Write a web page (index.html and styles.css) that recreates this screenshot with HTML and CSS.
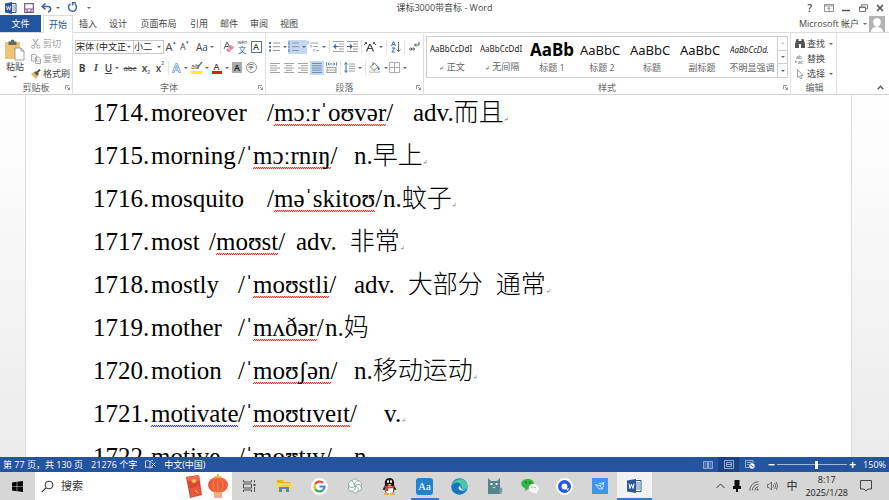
FILE: index.html
```html
<!DOCTYPE html>
<html lang="zh-CN">
<head>
<meta charset="utf-8">
<title>课标3000带音标 - Word</title>
<link rel="stylesheet" href="styles.css">
</head>
<body>
<header class="titlebar">
  <div class="quick">
    <svg width="12" height="12" viewBox="0 0 12 12"><path d="M6 1.500h5v9H6z" fill="#fff" stroke="#2b579a"/><path d="M7.500 4H10M7.500 6H10M7.500 8H10" stroke="#2b579a" stroke-width=".7"/><path d="M0 1.500 7 0v12L0 10.500z" fill="#2b579a"/><path d="m1.500 4 .9 4 1.100-3.500L4.600 8l.9-4" fill="none" stroke="#fff" stroke-width=".8"/></svg>
    <button aria-label="保存"><svg width="10" height="10" viewBox="0 0 10 10"><path d="M.7.700h8.600v8.600H.7z" fill="#fff" stroke="#80578f" stroke-width="1.200"/><path d="M1 6h8M3 6v3h4V6" fill="none" stroke="#80578f"/></svg></button>
    <button class="split" aria-label="撤消"><svg width="11" height="10" viewBox="0 0 11 10"><path d="M4.500.5 1.200 3.500l3.300 3M1.500 3.500H7c3.500 0 3.500 5 0 5.500" fill="none" stroke="#3c68a8" stroke-width="1.600"/></svg><i class="caret"></i></button>
    <button aria-label="重复"><svg width="11" height="11" viewBox="0 0 11 11"><path d="M3.500 1.800A4 4 0 1 0 8 2.200M5.600 3.600V.8H9" fill="none" stroke="#3c68a8" stroke-width="1.500"/></svg></button>
    <button aria-label="自定义"><i class="caret"></i></button>
  </div>
  <h1>课标3000带音标 - Word</h1>
  <div class="window-buttons">
    <button aria-label="帮助" class="help">?</button>
    <button aria-label="功能区"><svg width="10" height="8" viewBox="0 0 10 8"><path d="M.5.500h9v7h-9zM.5 2h9M5 7V3.500M3.500 5 5 3.500 6.500 5" fill="none" stroke="#777" stroke-width=".8"/></svg></button>
    <button aria-label="最小化"><svg width="9" height="8" viewBox="0 0 9 8"><path d="M0 6.500h8" stroke="#555" stroke-width="1.500"/></svg></button>
    <button aria-label="还原"><svg width="9" height="8" viewBox="0 0 9 8"><path d="M2.500 2.500V.8h6v4H6.500M.5 3h6v4.500h-6zM.5 3.400h6" fill="none" stroke="#666" stroke-width=".9"/></svg></button>
    <button aria-label="关闭"><svg width="8" height="8" viewBox="0 0 8 8"><path d="m1 1 6 6M7 1 1 7" stroke="#555" stroke-width="1.600"/></svg></button>
  </div>
</header>

<nav class="tabs">
  <button class="file">文件</button>
  <button class="active">开始</button>
  <button>插入</button>
  <button>设计</button>
  <button class="wide">页面布局</button>
  <button>引用</button>
  <button>邮件</button>
  <button>审阅</button>
  <button>视图</button>
  <a class="account" href="#account">Microsoft 帐户<i class="caret"></i>
    <svg width="16" height="16" viewBox="0 0 16 16"><path d="M0 0h16v16H0z" fill="#b3b3b3"/><path d="M8 2c6 0 4 9 0 9S2 2 8 2zM2 16c0-4 3-5 6-5s6 1 6 5z" fill="#fff"/></svg>
  </a>
</nav>

<section class="ribbon">
  <div class="group clipboard">
    <div class="clip-body">
      <button class="paste">
        <svg width="20" height="22" viewBox="0 0 20 22"><path d="M0 3h15v17H0z" fill="#efc372"/><path d="M3.500 2.500h2a2 2 0 0 1 4 0h2V6h-8z" fill="#666"/><path d="M10 9h6l3 3v9h-9z" fill="#fff" stroke="#888" stroke-width=".8"/><path d="M16 9v3h3" fill="none" stroke="#888" stroke-width=".8"/></svg>
        <span>粘贴</span><i class="caret"></i>
      </button>
      <div class="stack">
        <button class="off"><svg width="10" height="10" viewBox="0 0 10 10"><path d="m2 0 4 6M7 0 3 6" stroke="#aaa" stroke-width="1.200"/><circle cx="2" cy="7.800" r="1.500" fill="none" stroke="#aaa"/><circle cx="7.500" cy="7.800" r="1.500" fill="none" stroke="#aaa"/></svg>剪切</button>
        <button class="off"><svg width="10" height="10" viewBox="0 0 10 10"><path d="M.5.500h4l1 1V7h-5zM4.500 3h3l2 2v4.500h-5z" fill="#fff" stroke="#aaa"/><path d="M5.500 6h3M5.500 7.500h3M1.500 3h2M1.500 5h2" stroke="#bbb" stroke-width=".7"/></svg>复制</button>
        <button><svg width="10" height="10" viewBox="0 0 10 10"><path d="m0 5 3-2 4 4-2 3z" fill="#e9b45d"/><path d="m3 3.500 2-1.500 3 3-1.500 2z" fill="#555"/><path d="m6 3.500 3-3" stroke="#555" stroke-width="2"/></svg>格式刷</button>
      </div>
    </div>
    <footer><span>剪贴板</span><svg class="launch" width="5" height="5" viewBox="0 0 5 5"><path d="M.5 4V.5H4M2 2l2.500 2.500M4.500 2.500v2h-2" fill="none" stroke="#777" stroke-width=".8"/></svg></footer>
  </div>

  <div class="group font">
    <div class="row">
      <div class="combo name"><select aria-label="字体"><option>宋体 (中文正文)</option></select><i class="caret"></i></div>
      <div class="combo size"><select aria-label="字号"><option>小二</option></select><i class="caret"></i></div>
      <button class="w14 grow" aria-label="增大字号">A<sup>▴</sup></button>
      <button class="w14 shrink" aria-label="减小字号">A<sup>▾</sup></button>
      <button class="w28 case">Aa<i class="caret"></i></button>
      <i class="sep"></i>
      <button class="w14" aria-label="清除格式"><svg width="12" height="12" viewBox="0 0 12 12"><path d="m1 8 3-7 2.500 5M2 5.500h3.500" fill="none" stroke="#555"/><path d="m3 9 5-5 3 2.500-5 5z" fill="#e3879c"/><path d="m5 7 3 2.500" stroke="#fff" stroke-width=".7"/></svg></button>
      <button class="w14 pinyin"><small>wén</small><b>文</b></button>
      <button class="w14"><span class="boxed">A</span></button>
    </div>
    <div class="row">
      <button class="w14 bold">B</button>
      <button class="w14 italic">I</button>
      <button class="w18"><u>U</u><i class="caret"></i></button>
      <button class="w18 strike"><s>abc</s></button>
      <button class="w14 script">x<sub>2</sub></button>
      <button class="w14 script">x<sup>2</sup></button>
      <i class="sep"></i>
      <button class="w20" aria-label="文本效果"><svg width="9" height="10" viewBox="0 0 9 10"><path d="M.5 9.500 3.600.6h1.800l3.100 8.900H6.800l-.7-2.200H2.900l-.7 2.200zM3.400 5.800h2.200L4.500 2.400z" fill="#fff" stroke="#5d91cb" stroke-width=".8"/></svg><i class="caret"></i></button>
      <button class="w20"><span class="marker">ab<svg width="6" height="6" viewBox="0 0 6 6"><path d="M0 6 5 0" stroke="#666" stroke-width="1.300"/></svg></span><i class="caret"></i></button>
      <button class="w20"><span class="colour">A</span><i class="caret"></i></button>
      <button class="w14"><span class="shaded">A</span></button>
      <button class="w14"><span class="circled">字</span></button>
    </div>
    <footer><span>字体</span><svg class="launch" width="5" height="5" viewBox="0 0 5 5"><path d="M.5 4V.5H4M2 2l2.500 2.500M4.500 2.500v2h-2" fill="none" stroke="#777" stroke-width=".8"/></svg></footer>
  </div>

  <div class="group paragraph">
    <div class="row">
      <button class="w20" aria-label="项目符号"><svg width="11" height="11" viewBox="0 0 11 11"><path d="M0 1h2v2H0zM0 4.700h2v2H0zM0 8.500h2v2H0z" fill="#4472b4"/><path d="M4 2h7M4 5.700h7M4 9.500h7" stroke="#888" stroke-width=".9"/></svg><i class="caret"></i></button>
      <button class="w20 on" aria-label="编号"><svg width="11" height="11" viewBox="0 0 11 11"><path d="M1 .5v3M1 4.500v2.500M1 8v3" stroke="#4472b4"/><path d="M4 2h7M4 5.700h7M4 9.500h7" stroke="#7f91ac" stroke-width=".9"/></svg><i class="caret"></i></button>
      <button class="w20" aria-label="多级列表"><svg width="12" height="11" viewBox="0 0 12 11"><path d="M1 0v3M4 4v2.500M7 8v2.500" stroke="#7c99c2"/><path d="M3 2h8M6 5.500h5M9 9.500h3" stroke="#999" stroke-width=".9"/></svg><i class="caret"></i></button>
      <i class="sep"></i>
      <button class="w14" aria-label="减少缩进"><svg width="11" height="11" viewBox="0 0 11 11"><path d="M0 .5h11M6 3h5M6 5.500h5M6 8h5M0 10.500h11" stroke="#888" stroke-width=".8"/><path d="M5.500 5.500H1M3 3.500l-2 2 2 2" fill="none" stroke="#3569ad" stroke-width="1.200"/></svg></button>
      <button class="w14" aria-label="增加缩进"><svg width="11" height="11" viewBox="0 0 11 11"><path d="M0 .5h11M6 3h5M6 5.500h5M6 8h5M0 10.500h11" stroke="#888" stroke-width=".8"/><path d="M0 5.500h5M3 3.500l2 2-2 2" fill="none" stroke="#3569ad" stroke-width="1.200"/></svg></button>
      <i class="sep"></i>
      <button class="w20" aria-label="中文版式"><svg width="12" height="10" viewBox="0 0 12 10"><path d="m2.500 9.500 3-7h1l3 7M4 6.500h4" fill="none" stroke="#444" stroke-width="1.200"/><path d="m0 3 2-2M1 .5h1.500V2M12 3l-2-2M11 .5H9.500V2" fill="none" stroke="#444" stroke-width=".9"/></svg><i class="caret"></i></button>
      <i class="sep"></i>
      <button class="w14" aria-label="排序"><svg width="10" height="12" viewBox="0 0 10 12"><path d="m.5 5 2-4.500 2 4.500M1.300 3.500h2.400M.8 7H4L.8 11H4.200" fill="none" stroke="#3569ad"/><path d="M7.500 1v9.500M5.500 8.500l2 2.200 2-2.200" fill="none" stroke="#666"/></svg></button>
      <i class="sep"></i>
      <button class="w14" aria-label="显示标记"><svg width="11" height="11" viewBox="0 0 11 11"><path d="M10 1v3H5.500M7 2.500 5.500 4 7 5.500M0 8h5.500M4 6.300 5.700 8 4 9.700M1.500 6.500 3 8 1.500 9.500" fill="none" stroke="#555"/></svg></button>
    </div>
    <div class="row">
      <button class="w14" aria-label="左对齐"><svg width="10" height="10" viewBox="0 0 10 10"><path d="M0 .5h10M0 2.700h7M0 5h10M0 7.200h7M0 9.500h10" stroke="#888" stroke-width=".8"/></svg></button>
      <button class="w14" aria-label="居中"><svg width="10" height="10" viewBox="0 0 10 10"><path d="M0 .5h10M2 2.700h6M0 5h10M2 7.200h6M0 9.500h10" stroke="#888" stroke-width=".8"/></svg></button>
      <button class="w14" aria-label="右对齐"><svg width="10" height="10" viewBox="0 0 10 10"><path d="M0 .5h10M3 2.700h7M0 5h10M3 7.200h7M0 9.500h10" stroke="#888" stroke-width=".8"/></svg></button>
      <button class="w14 on" aria-label="两端对齐"><svg width="10" height="10" viewBox="0 0 10 10"><path d="M0 .5h10M0 2.700h10M0 5h10M0 7.200h10M0 9.500h10" stroke="#6c81a1" stroke-width=".9"/></svg></button>
      <button class="w14" aria-label="分散对齐"><svg width="11" height="11" viewBox="0 0 11 11"><path d="M.5 0v4M10.500 0v4M2 2h7M3.500.5 2 2l1.500 1.500M7.500.5 9 2 7.500 3.500" fill="none" stroke="#4b73a8" stroke-width=".8"/><path d="M1 5.500h9M1 8h9M1 10.500h9M1 5v6M10 5v6" stroke="#888" stroke-width=".8"/></svg></button>
      <i class="sep"></i>
      <button class="w20" aria-label="行距"><svg width="11" height="11" viewBox="0 0 11 11"><path d="M2 .5v10M.3 2.500 2 .7l1.700 1.800M.3 8.500 2 10.300l1.700-1.800" fill="none" stroke="#3569ad"/><path d="M5 2h6M5 4.300h6M5 6.600h6M5 9h6" stroke="#888" stroke-width=".8"/></svg><i class="caret"></i></button>
      <i class="sep"></i>
      <button class="w20" aria-label="底纹"><svg width="12" height="11" viewBox="0 0 12 11"><path d="m1.500 5 4-4 3.500 4-4 3.500zM4 3V0" fill="#fff" stroke="#666" stroke-width=".9"/><path d="M9.500 4.500c1.500 2 1.500 3 .5 3.500s-1.500-1-.5-3.500z" fill="#3569ad"/><path d="M.5 9h10v1.500H.5z" fill="#fff" stroke="#aaa" stroke-width=".6"/></svg><i class="caret"></i></button>
      <button class="w20" aria-label="边框"><svg width="11" height="11" viewBox="0 0 11 11"><path d="M.5.500h10v10H.5zM5.500.5v10M.5 5.500h10" fill="none" stroke="#999" stroke-width=".8"/></svg><i class="caret"></i></button>
    </div>
    <footer><span>段落</span><svg class="launch" width="5" height="5" viewBox="0 0 5 5"><path d="M.5 4V.5H4M2 2l2.500 2.500M4.500 2.500v2h-2" fill="none" stroke="#777" stroke-width=".8"/></svg></footer>
  </div>

  <div class="group styles">
    <div class="gallery">
      <button><span class="sample">AaBbCcDdI</span><span><small>↲</small> 正文</span></button>
      <button><span class="sample">AaBbCcDdI</span><span><small>↲</small> 无间隔</span></button>
      <button><span class="sample huge">AaBb</span><span>标题 1</span></button>
      <button><span class="sample large">AaBbC</span><span>标题 2</span></button>
      <button><span class="sample large">AaBbC</span><span>标题</span></button>
      <button><span class="sample large">AaBbC</span><span>副标题</span></button>
      <button><span class="sample slant">AaBbCcDd.</span><span>不明显强调</span></button>
      <div class="scroller"><button aria-label="上一行"><i class="caret up"></i></button><button aria-label="下一行"><i class="caret"></i></button><button aria-label="更多"><i class="caret more"></i></button></div>
    </div>
    <footer><span>样式</span><svg class="launch" width="5" height="5" viewBox="0 0 5 5"><path d="M.5 4V.5H4M2 2l2.500 2.500M4.500 2.500v2h-2" fill="none" stroke="#777" stroke-width=".8"/></svg></footer>
  </div>

  <div class="group editing">
    <div class="stack">
      <button><svg width="10" height="9" viewBox="0 0 10 9"><path d="M1.500 0h2v2h3V0h2L10 5v4H6V5H4v4H0V5z" fill="#555"/></svg>查找<i class="caret"></i></button>
      <button><svg width="10" height="10" viewBox="0 0 10 10"><text x="1" y="5" class="tiny">ab</text><text x="3" y="10" class="tiny">ac</text><path d="M0 6v2h2" fill="none" stroke="#3569ad" stroke-width=".8"/></svg>替换</button>
      <button><svg width="10" height="10" viewBox="0 0 10 10"><path d="m2.500.5 5.500 6H5.500L7 9.300 5.500 10 4.300 7.200 2.500 8.500z" fill="#fff" stroke="#888" stroke-width=".8"/></svg>选择<i class="caret"></i></button>
    </div>
    <footer><span>编辑</span></footer>
  </div>
  <button class="collapse" aria-label="折叠功能区"><svg width="7" height="5" viewBox="0 0 7 5"><path d="m.7 4.200 2.800-3 2.800 3" fill="none" stroke="#555" stroke-width="1.300"/></svg></button>
</section>

<main class="workspace">
  <article class="page">
    <p><span class="num">1714.</span><span class="t4">moreover</span><span class="t5">/<span class="bad">mɔːrˈoʊvər</span>/</span>adv.而且<i class="mark">↲</i></p>
    <p><span class="num">1715.</span><span class="t3">morning</span><span class="t4">/<span class="stress">ˈ</span><span class="bad">mɔːrnɪŋ</span>/</span>n.早上<i class="mark">↲</i></p>
    <p><span class="num">1716.</span><span class="t4">mosquito</span><span class="t4">/<span class="bad">məˈskitoʊ</span>/</span>n.蚊子<i class="mark">↲</i></p>
    <p><span class="num">1717.</span><span class="t2">most</span><span class="t3">/<span class="bad">moʊst</span>/</span>adv.<span class="next">非常</span><i class="mark">↲</i></p>
    <p><span class="num">1718.</span><span class="t3">mostly</span><span class="t4">/<span class="stress">ˈ</span><span class="bad">moʊstli</span>/</span>adv.<span class="next">大部分</span><span class="next">通常</span><i class="mark">↲</i></p>
    <p><span class="num">1719.</span><span class="t3">mother</span><span class="t3">/<span class="stress">ˈ</span><span class="bad">mʌðər</span>/</span>n.妈</p>
    <p><span class="num">1720.</span><span class="t3">motion</span><span class="t4">/<span class="stress">ˈ</span><span class="bad">moʊʃən</span>/</span>n.移动运动<i class="mark">↲</i></p>
    <p><span class="num">1721.</span><span class="t3"><span class="grammar">motivate</span></span><span class="t5">/<span class="stress">ˈ</span><span class="bad">moʊtɪveɪt</span>/</span>v.<i class="mark">↲</i></p>
    <p><span class="num">1722.</span><span class="t3">motive</span><span class="t4">/<span class="stress">ˈ</span><span class="bad">moʊtɪv</span>/</span>n.</p>
  </article>
</main>

<footer class="status">
  <span>第 77 页，共 130 页</span>
  <span>21276 个字</span>
  <svg width="11" height="9" viewBox="0 0 11 9"><path d="M5 1.500C3.500.5 2 .5.5 1v6.500c1.500-.5 3-.5 4.500.5zM5 1.500C6 .8 7 .6 8 .6M5 8c1-.7 2-.9 3-.9M6.500 2.500l4 4M10.500 2.500l-4 4" fill="none" stroke="#dce6f4" stroke-width=".9"/></svg>
  <span>中文(中国)</span>
  <div class="views">
    <button aria-label="阅读视图"><svg width="10" height="8" viewBox="0 0 10 8"><path d="M.5.500h4v7h-4zM5.500.500h4v7h-4zM1.500 2h2M1.500 4h2M1.500 6h2M6.500 2h2M6.500 4h2M6.500 6h2" fill="none" stroke="#a9bfde" stroke-width=".8"/></svg></button>
    <button class="current" aria-label="页面视图"><svg width="10" height="9" viewBox="0 0 10 9"><path d="M.5.500h9v8h-9zM2.500 2.500h5v4h-5zM2.500 4.500h5" fill="none" stroke="#b3c6e2" stroke-width=".8"/></svg></button>
    <button aria-label="Web 版式"><svg width="10" height="9" viewBox="0 0 10 9"><path d="M8 3V.5H.5v7H4M2 2.500h5M2 4.500h2" fill="none" stroke="#b3c6e2" stroke-width=".8"/><circle cx="7" cy="6" r="2.700" fill="#fff"/><path d="m5.500 5 3 2" stroke="#2b579a"/></svg></button>
  </div>
  <div class="zoom"><button aria-label="缩小">−</button><input type="range" min="10" max="210" value="122" aria-label="显示比例"><button aria-label="放大">+</button><span>150%</span></div>
</footer>

<nav class="taskbar">
  <button class="start" aria-label="开始菜单"><svg width="11" height="11" viewBox="0 0 11 11"><path d="m0 1.500 4.700-.7v4.400H0zM5.300.7 11 0v5.200H5.300zM0 5.800h4.700v4.400L0 9.500zM5.300 5.800H11V11l-5.700-.7z" fill="#000"/></svg></button>
  <label class="search">
    <svg width="13" height="13" viewBox="0 0 13 13"><circle cx="8" cy="5" r="3.900" fill="none" stroke="#333"/><path d="M5 7.800.7 12.200" stroke="#333" stroke-width="1.200"/></svg>
    <input type="text" placeholder="搜索" aria-label="搜索">
    <svg width="44" height="25" viewBox="0 0 44 25"><path d="m1 3 13-2 3 20-12 3z" fill="#db4932"/><path d="m1 3 13-2 .8 5L9 9 2 6z" fill="#ec6c4b"/><path d="m5 14 9-2 2 8-10 3z" fill="#f0643e" opacity=".6"/><circle cx="9" cy="7" r="2" fill="#f9c65c"/><path d="m10 16 3 3" stroke="#f9c65c"/><path d="M33 0v4" stroke="#a8603c"/><path d="M29 19h8v5h-8z" fill="#f1aa9d"/><ellipse cx="33" cy="11" rx="10" ry="8" fill="#ec5d3c"/><ellipse cx="33" cy="11" rx="5" ry="8" fill="none" stroke="#f58a4a"/><path d="M33 3v16" stroke="#f58a4a"/><path d="M29 3h8M29 19h8" stroke="#f1b84e" stroke-width="1.500"/></svg>
  </label>
  <div class="apps">
    <button aria-label="任务视图"><svg width="13" height="12" viewBox="0 0 13 12"><path d="M.5 0v2h8V0M.5 12v-2h8v2M.5 4h8v4h-8zM11.500 0v2.500M11.500 7v5" fill="none" stroke="#444" stroke-width=".9"/><path d="M10.500 4h2v2h-2z" fill="#444"/></svg></button>
    <button aria-label="文件资源管理器"><svg width="17" height="14" viewBox="0 0 17 14"><path d="M1 1h6l1 2h7v9H1z" fill="#ebae2d"/><path d="M1 4h15v8H1z" fill="#ffd45e"/><path d="M3 13V8h10v5h-3v-3H6v3z" fill="#428fd0"/></svg></button>
    <button aria-label="Google"><svg width="17" height="17" viewBox="0 0 17 17"><circle cx="8.500" cy="8.500" r="8.500" fill="#fff"/><g fill="none" stroke-width="2.200"><path d="M12 4.900A5 5 0 0 0 4.200 6" stroke="#ea4335"/><path d="M4.200 6a5 5 0 0 0 0 5" stroke="#fbbc05"/><path d="M4.200 11a5 5 0 0 0 7.800 1.100" stroke="#34a853"/><path d="M12 12.100a5 5 0 0 0 1.400-3.600H8.500" stroke="#4285f4"/></g></svg></button>
    <button aria-label="浏览器"><svg width="16" height="16" viewBox="0 0 16 16"><g fill="#f6faf7" stroke="#6f9a90" stroke-width=".7"><path id="petal" d="M8 8C3 7 4 1 8 1c3 0 4 3 2 4z"/><use href="#petal" transform="rotate(60 8 8)"/><use href="#petal" transform="rotate(120 8 8)"/><use href="#petal" transform="rotate(180 8 8)"/><use href="#petal" transform="rotate(240 8 8)"/><use href="#petal" transform="rotate(300 8 8)"/></g></svg></button>
    <button aria-label="QQ"><svg width="15" height="17" viewBox="0 0 15 17"><path d="M7.500 0C3 0 2.500 4 3 7L.5 12l2-.5 1 3h8l1-3 2 .5L12 7c.5-3 0-7-4.500-7z" fill="#151515"/><ellipse cx="7.500" cy="11.500" rx="4" ry="4" fill="#fff"/><path d="M2.500 7.500q5 2 10 0v2q-5 2-10 0z" fill="#e33b2e"/><path d="M4 8.500h2V13H4z" fill="#e33b2e"/><ellipse cx="6" cy="3.500" rx="1" ry="1.500" fill="#fff"/><ellipse cx="9" cy="3.500" rx="1" ry="1.500" fill="#fff"/><path d="M5 6h5l-2.500 1.500zM2.500 15h4.500v1.800H2zM8 15h4.500l.5 1.800H8z" fill="#f5a52c"/></svg></button>
    <button class="running" aria-label="词典"><span class="dictionary">Aa</span></button>
    <button aria-label="Edge"><svg width="17" height="17" viewBox="0 0 17 17"><circle cx="8.500" cy="8.500" r="8.300" fill="#2490d0"/><path d="M.5 8C2 1 15-2 16.700 8c.3 3-4.500 4-6.500 2 1-2-1-4-4-4-2.500 0-4.500 1-5.700 2z" fill="#4bc9a5"/><path d="M.5 8C4 2 11 5 10.500 8.500 9 11 13 13 16 11c-3 7-12 7-15 1z" fill="#1676bd"/><path d="M9.500 7c-1 3 2 6 6 4.500-2 1.500-8 2-8-2z" fill="#e5f1fa"/></svg></button>
    <button aria-label="猫"><svg width="16" height="17" viewBox="0 0 16 17"><path d="m1 0 3 3h6l3-3v16H1z" fill="#53868a"/><path d="M13 10c3-2 3 3 1 6h-2" fill="#7a9d9f"/><path d="M3.500 5h2v2h-2zM8.500 5h2v2h-2z" fill="#fff"/><path d="m5.500 9 1.500 1 1.500-1" fill="none" stroke="#d6e7e8"/></svg></button>
    <button aria-label="微信"><svg width="18" height="15" viewBox="0 0 18 15"><path d="M7 0c8 0 8 10 0 10l-3 2 .3-2.500C-2 7-1 0 7 0z" fill="#35b54a"/><path d="M12 5c7 0 7 6.500 4 8l.3 2-2.300-1C6 14 6 5 12 5z" fill="#f4f4f4"/><circle cx="5" cy="3.500" r=".9" fill="#176426"/><circle cx="9" cy="3.500" r=".9" fill="#176426"/><circle cx="11" cy="8.500" r=".7" fill="#999"/><circle cx="14" cy="8.500" r=".7" fill="#999"/></svg></button>
    <button aria-label="夸克"><svg width="17" height="17" viewBox="0 0 17 17"><circle cx="8.500" cy="8.500" r="8.500" fill="#fff"/><circle cx="8.500" cy="8.500" r="4.700" fill="#fff" stroke="#2458e5" stroke-width="3.600"/><path d="m10 11 3-1-1 3z" fill="#fff"/></svg></button>
    <button aria-label="白板"><svg width="16" height="16" viewBox="0 0 16 16"><path d="M0 0h16v16H0z" fill="#3f92f7"/><path d="M3.500 6.500 8 8l4-3.500-1.500 6.500L8 8M3.500 6.500 7 11l3.500 0M12 4.500 6.500 6" fill="none" stroke="#d6eaff" stroke-width=".9"/></svg></button>
    <button class="running selected" aria-label="Word"><svg width="15" height="14" viewBox="0 0 15 14"><path d="M7 1.500h7v11H7z" fill="#fff" stroke="#2b579a"/><path d="M9 4h4M9 6h4M9 8h4M9 10h4" stroke="#2b579a" stroke-width=".8"/><path d="m0 1.500 9-1.500v14L0 12.500z" fill="#2b579a"/><path d="M2 4.500 3 9.500l1.500-4.300L6 9.500l1-5" fill="none" stroke="#fff"/></svg></button>
  </div>
  <div class="tray">
    <svg width="9" height="6" viewBox="0 0 9 6"><path d="m.5 5 4-4 4 4" fill="none" stroke="#333"/></svg>
    <svg width="8" height="12" viewBox="0 0 8 12"><path d="M1.500 0h5v7h-5zM0 6h8v3H5v3H3V9H0z" fill="#111"/></svg>
    <svg width="10" height="10" viewBox="0 0 10 10"><path d="M.7 9.500A9 9 0 0 1 9.500.7M3.200 9.500a6.500 6.500 0 0 1 6.300-6.300M5.700 9.500a4 4 0 0 1 3.800-3.800" fill="none" stroke="#666"/><circle cx="8.500" cy="8.500" r="1" fill="#555"/></svg>
    <svg width="11" height="10" viewBox="0 0 11 10"><path d="M.5 3.500H2L4.500 1v8L2 6.500H.5zM6 3.500q1 1.500 0 3M7.700 2q2 3 0 6M9.300 1q2.500 4 0 8" fill="none" stroke="#555" stroke-width=".8"/></svg>
    <span class="ime">中</span>
    <time>8:17<br>2025/1/28</time>
    <svg class="notice" width="12" height="12" viewBox="0 0 12 12"><path d="M.5.500h11v8.500H8L6 11 4 9H.5z" fill="none" stroke="#444"/></svg>
  </div>
</nav>
</body>
</html>
```
FILE: styles.css
```css
* { box-sizing: border-box; }

body {
  margin: 0;
  height: 100vh;
  display: flex;
  flex-direction: column;
  overflow: hidden;
  background: #fff;
  color: #444;
  font: 9px/12px "Open Sans", "Noto Sans CJK SC", sans-serif;
}

button, select, input {
  font: inherit;
  color: inherit;
  background: none;
  border: 0;
  padding: 0;
  margin: 0;
}

button {
  display: flex;
  align-items: center;
  justify-content: center;
  white-space: nowrap;
}

svg { display: block; flex: none; }

.caret {
  flex: none;
  margin-left: 2px;
  border: 2px solid transparent;
  border-top-color: #666;
  border-bottom: 0;
}

/* Title bar and tabs */
.titlebar {
  flex: none;
  height: 15px;
  display: grid;
  grid-template-columns: 1fr auto 1fr;
  align-items: center;
}

.quick { display: flex; align-items: center; gap: 6px; padding-left: 5px; }
.quick .split { gap: 2px; }
.quick > * + * { margin-left: 1px; }
.titlebar h1 { margin: 0; font-size: 9px; font-weight: 400; }
.window-buttons { display: flex; justify-content: flex-end; gap: 8px; padding-right: 5px; }
.window-buttons .help { font-size: 10px; font-weight: 600; margin-right: 4px; }

.tabs { flex: none; height: 18px; display: flex; border-bottom: 1px solid #dcdcdc; }
.tabs button { width: 30px; }
.tabs .file { width: 41px; margin-right: 2px; background: #2254a0; color: #fff; }
.tabs .active { color: #2b579a; border: 1px solid #dcdcdc; border-bottom: 0; height: 18px; background: #fff; }
.tabs .wide { width: 51px; }
.account {
  margin-left: auto;
  display: flex;
  align-items: center;
  gap: 2px;
  padding-right: 4px;
  color: #444;
  text-decoration: none;
}

/* Ribbon */
.ribbon { flex: none; height: 62px; display: flex; border-bottom: 1px solid #d4d4d4; }

.group {
  display: flex;
  flex-direction: column;
  padding: 3px 2px 0;
  border-right: 1px solid #e1e1e1;
}

.group > footer {
  margin-top: auto;
  height: 13px;
  display: grid;
  grid-template-columns: 1fr auto 1fr;
  align-items: center;
  color: #666;
}
.group > footer span { grid-column: 2; }
.launch { justify-self: end; }

.row { display: flex; align-items: center; height: 21px; }
.sep { width: 1px; height: 14px; margin: 0 2px; background: #e4e4e4; }
.w14 { width: 14px; height: 14px; }
.w18 { width: 18px; height: 14px; }
.w20 { width: 20px; height: 14px; }
.w28 { width: 28px; height: 14px; }
.on { background: #c5d8f2; }
.row .w20 .caret, .row .w18 .caret { margin-left: 3px; }

.clipboard { width: 73px; }
.clip-body { display: flex; gap: 5px; }
.paste { width: 24px; flex-direction: column; margin-left: 2px; }
.paste .caret { margin: 3px 0 0; }
.stack { display: flex; flex-direction: column; }
.stack button { height: 15px; gap: 2px; justify-content: flex-start; }
.off { color: #a0a0a0; }

.font { width: 193px; }
.font .sep { margin: 0 1px; }
.combo { display: flex; align-items: center; height: 14px; border: 1px solid #c6c6c6; padding-right: 2px; }
.combo select { appearance: none; width: 100%; min-width: 0; color: #222; }
.combo.name { width: 60px; }
.combo.size { width: 31px; margin-left: -1px; }
.combo .caret { margin-left: 0; }
.grow { font-size: 11px; }
.shrink { font-size: 9px; }
.font sup, .font sub { font-size: 5px; line-height: 5px; color: #35649f; }
.font sup { align-self: flex-start; }
.font sub { align-self: flex-end; }
.case { font-size: 10px; }
.pinyin { flex-direction: column; }
.pinyin small { font-size: 5px; line-height: 5px; }
.pinyin b { font-size: 8px; line-height: 9px; font-weight: 400; color: #35649f; }
.boxed { width: 11px; border: 1px solid #55759e; font-weight: 600; line-height: 10px; text-align: center; }
.bold { font-size: 10px; font-weight: 700; }
.italic { font: italic 700 10px "Liberation Serif", serif; }
.w18 u { font-size: 10px; font-weight: 600; }
.strike { font-size: 8px; }
.script { font-size: 10px; font-weight: 600; }
.marker { display: flex; width: 11px; font-size: 7px; line-height: 9px; border-bottom: 3px solid #fdf200; }
.marker svg { margin-left: -2px; }
.colour { width: 10px; font-weight: 600; line-height: 9px; border-bottom: 3px solid #e31b12; }
.shaded { width: 10px; background: #aaa; color: #222; font-weight: 600; line-height: 11px; }
.circled { width: 11px; height: 11px; border: 1px solid #888; border-radius: 50%; font-size: 6px; line-height: 9px; }

.paragraph { width: 158px; }

.styles { flex: none; width: 367px; }
.gallery { display: flex; height: 42px; border: 1px solid #cfcfcf; }
.gallery > button { width: 50px; flex-direction: column; justify-content: flex-end; padding-bottom: 3px; color: #666; }
.gallery small { font-size: 6px; }
.sample {
  width: 44px;
  height: 24px;
  overflow: hidden;
  text-align: left;
  font: 8px/24px "Noto Sans", sans-serif;
  color: #222;
}
.sample.large { font-size: 13px; color: #111; }
.sample.huge { font-size: 17px; font-weight: 700; color: #000; }
.sample.slant { font-style: italic; }
.scroller { flex: 1; display: flex; flex-direction: column; border-left: 1px solid #cfcfcf; }
.scroller button { flex: 1; border-bottom: 1px solid #cfcfcf; }
.scroller button:last-child { border-bottom: 0; }
.scroller .caret { margin: 0; }
.scroller .up { opacity: .4; transform: rotate(180deg); }

.editing { width: 46px; padding-left: 4px; }
.tiny { font: 5px "Open Sans", sans-serif; fill: #555; }
.collapse { margin: auto 5px 4px auto; }

/* Document */
.workspace {
  flex: 1;
  min-height: 0;
  overflow: hidden;
  padding: 0 37px 0 25px;
  background: linear-gradient(#fff, #ebebeb);
}
.page {
  min-height: 100%;
  padding: 0 67px;
  background: #fff;
  color: #000;
  border: solid #dedede;
  border-width: 0 1px;
  font: 25px/43px "Liberation Serif", "Noto Sans CJK SC", serif;
  font-weight: 300;
}
.page p { display: flex; height: 43px; margin: 0; white-space: nowrap; }
.page p:first-child { margin-top: -4px; }
.num { width: 58px; }
.t2 { width: 58px; }
.t3 { width: 87px; }
.t4 { width: 116px; }
.t5 { width: 146px; }
.stress { display: inline-block; width: 8px; text-align: center; }
.next { margin-left: 13px; }
/* Two-pixel checkerboard reads as the fine proofing squiggle */
.bad, .grammar {
  background: conic-gradient(#e0362c 25%, #f6c4c0 0 50%, #e0362c 0 75%, #f6c4c0 0) left bottom / 2px 2px repeat-x;
}
.grammar {
  background-image: conic-gradient(#3340d0 25%, #c5c8f4 0 50%, #3340d0 0 75%, #c5c8f4 0);
}
.mark { font: 6px/56px "DejaVu Sans", sans-serif; color: #888; }

/* Status bar */
.status {
  flex: none;
  height: 15px;
  display: flex;
  align-items: center;
  gap: 8px;
  padding: 0 3px;
  background: #24539f;
  color: #fff;
}
.views { display: flex; margin-left: auto; }
.views button { width: 21px; height: 15px; }
.views .current { background: #1b4283; }
.zoom { display: flex; align-items: center; gap: 2px; }
.zoom button { font-size: 12px; font-weight: 700; }
.zoom span { margin-left: 5px; }
.zoom input {
  appearance: none;
  width: 70px;
  height: 9px;
  background: linear-gradient(#9fb6da, #9fb6da) center / 100% 1px no-repeat;
}
.zoom input::-webkit-slider-thumb { appearance: none; width: 3px; height: 8px; background: #fff; }

/* Taskbar */
.taskbar { flex: none; height: 28px; display: flex; background: #d6d6d6; color: #222; }
.start { width: 35px; }
.search { width: 197px; display: flex; align-items: center; padding: 0 3px 0 6px; background: #fff; }
.search input { flex: 1; min-width: 0; margin-left: 7px; font-size: 11px; }
.search input::placeholder { color: #333; }
.apps { display: flex; }
.apps button { width: 35px; height: 28px; }
.running { background: linear-gradient(#2b7cd3, #2b7cd3) bottom / 28px 2px no-repeat; }
.running.selected { background: linear-gradient(#2b7cd3, #2b7cd3) bottom / 100% 2px no-repeat #f2f2f2; }
.dictionary {
  width: 17px;
  height: 17px;
  border-radius: 3px;
  background: #2481cf;
  color: #fff;
  font: 11px/16px "Liberation Serif", serif;
}
.tray { margin-left: auto; display: flex; align-items: center; gap: 8px; padding-right: 17px; }
.ime { font-size: 11px; }
.tray time { font-size: 9px; line-height: 13px; text-align: center; }
.notice { margin-left: 4px; }
```
